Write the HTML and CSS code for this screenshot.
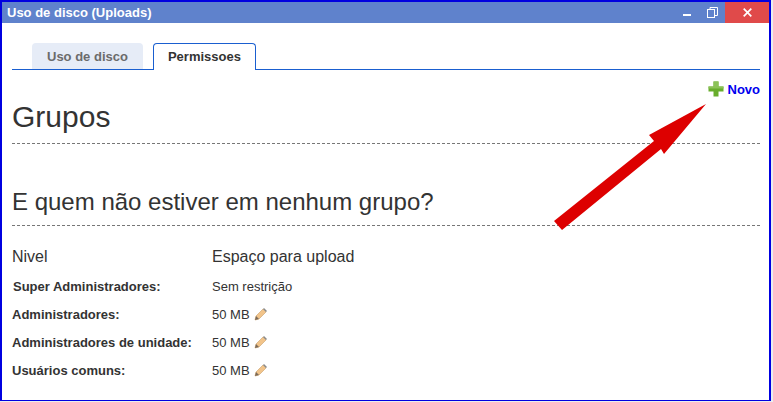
FILE: index.html
```html
<!DOCTYPE html>
<html lang="pt">
<head>
<meta charset="utf-8">
<title>Uso de disco (Uploads)</title>
<link rel="stylesheet" href="styles.css">
</head>
<body>
<div class="window">
  <header class="titlebar">
    <span class="title">Uso de disco (Uploads)</span>
    <div class="controls">
      <span class="ctl min"><svg width="10" height="10" viewBox="0 0 10 10"><rect x="1" y="6" width="8" height="2" fill="#fff"/></svg></span>
      <span class="ctl restore"><svg width="11" height="11" viewBox="0 0 11 11" fill="none" stroke="#fff"><rect x="0.5" y="2.500" width="7" height="8"/><path d="M3 2.500V.5h7.500v8H8"/></svg></span>
      <span class="ctl close"><svg width="9" height="9" viewBox="0 0 9 9" stroke="#fff" stroke-width="1.700"><path d="M.7.7l7.600 7.600M8.300.7L.7 8.300"/></svg></span>
    </div>
  </header>
  <main class="content">
    <nav class="tabs">
      <a class="tab">Uso de disco</a>
      <a class="tab active">Permissoes</a>
    </nav>
    <div class="actions">
      <a class="new">
        <svg width="16" height="16" viewBox="0 0 16 16"><path d="M5.500 .5h5v5H15.500v5H10.500v5h-5v-5H.5v-5h5z" fill="#68ad2c"/><path d="M5.500 .5h5v5H15.500v2H.5v-2h5z" fill="#8cc258"/></svg>
        Novo
      </a>
    </div>
    <h1>Grupos</h1>
    <h2>E quem não estiver em nenhum grupo?</h2>
    <div class="grid">
      <div class="head">Nivel</div><div class="head">Espaço para upload</div>
      <div class="label first">Super Administradores:</div><div class="value">Sem restrição</div>
      <div class="label">Administradores:</div><div class="value">50 MB <svg class="pencil" width="14" height="14" viewBox="0 0 14 14"><use href="#pen"/></svg></div>
      <div class="label">Administradores de unidade:</div><div class="value">50 MB <svg class="pencil" width="14" height="14" viewBox="0 0 14 14"><use href="#pen"/></svg></div>
      <div class="label">Usuários comuns:</div><div class="value">50 MB <svg class="pencil" width="14" height="14" viewBox="0 0 14 14"><use href="#pen"/></svg></div>
    </div>
  </main>
  <svg class="arrow" width="773" height="402" viewBox="0 0 773 402"><polygon points="706,104 649,135 654,141 554,221 562,230 661,149 664,154" fill="#dd0000"/></svg>
  <svg width="0" height="0" class="defs"><defs><g id="pen"><path d="M1 13l1-4 7-7 3 3-7 7z" fill="#f2c48a" stroke="#c9a06a" stroke-width=".6"/><path d="M9 2l1-1 3 3-1 1z" fill="#8a8a8a"/><path d="M1 13l1-4 3 3z" fill="#7a6a5a"/></g></defs></svg>
</div>
</body>
</html>
```
FILE: styles.css
```css
* { box-sizing: border-box; }
html, body { margin: 0; padding: 0; }
body { font-family: "Liberation Sans", Arial, sans-serif; color: #333; background: #e9eef0; }
.window { position: relative; width: 771px; height: 401px; border: 2px solid #0000e0; border-bottom-width: 1px; overflow: hidden; background: #fff; }
.titlebar { height: 21px; background: #5f82cc; display: flex; justify-content: space-between; align-items: center; padding-left: 5px; }
.title { color: #fff; font-size: 13px; font-weight: bold; }
.controls { display: flex; height: 100%; align-items: center; }
.ctl { height: 100%; display: flex; align-items: center; justify-content: center; }
.ctl.min { width: 24px; }
.ctl.restore { width: 26px; }
.ctl.close { width: 44px; background: #e04a4a; }
.content { padding: 20px 9px 0 10px; }
.tabs { display: flex; gap: 10px; height: 27px; padding-left: 20px; border-bottom: 1px solid #1a5fd0; }
.tab { font-size: 13px; font-weight: bold; height: 26px; padding: 0 15px; line-height: 28px; background: #e6ecf7; color: #6b6b6b; border-radius: 4px 4px 0 0; }
.tab.active { height: 27px; background: #fff; color: #333; border: 1px solid #1a5fd0; border-bottom: none; padding: 0 14px; line-height: 26px; }
.actions { display: flex; justify-content: flex-end; margin-top: 11px; height: 16px; }
.new { display: flex; align-items: center; gap: 4px; color: #0000ee; font-size: 13px; font-weight: bold; }
h1 { margin: 0; font-size: 30px; font-weight: normal; height: 47px; padding-top: 3px; border-bottom: 1px dashed #777; line-height: 34px; }
h2 { margin: 43px 0 0; font-size: 24px; font-weight: normal; height: 39px; line-height: 30px; border-bottom: 1px dashed #777; }
.grid { display: grid; grid-template-columns: 200px 1fr; grid-template-rows: 29px; grid-auto-rows: 28px; align-items: center; margin-top: 17px; }
.head { font-size: 16px; padding-bottom: 2px; }
.label { font-size: 13px; font-weight: bold; }
.label.first { padding-left: 1px; }
.value { font-size: 13px; display: flex; align-items: center; gap: 4px; }
.arrow { position: absolute; left: -2px; top: -2px; pointer-events: none; }
.defs { position: absolute; }
```
